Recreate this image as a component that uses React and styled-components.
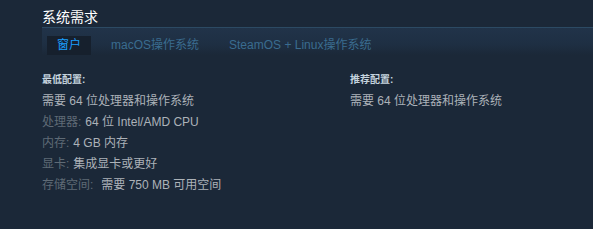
import React from "react";
import styled, { createGlobalStyle } from "styled-components";

const Global = createGlobalStyle`
  body {
    margin: 0;
    background: #1b2838;
    overflow: hidden;
    font-family: "Liberation Sans", Arial, "Noto Sans CJK SC", sans-serif;
  }
`;

const Page = styled.div`
  width: 593px;
  height: 229px;
  background: #1b2838;
  padding-left: 42px;
  box-sizing: border-box;
`;

const Heading = styled.div`
  padding-top: 8px;
  height: 19px;
  font-size: 14px;
  line-height: 19px;
  color: #ffffff;
`;

const TabBar = styled.div`
  display: flex;
  gap: 10px;
  height: 28px;
  padding: 8px 0 0 5px;
  box-sizing: border-box;
  border-top: 1px solid #2c4a63;
  background: linear-gradient(to bottom, #213349 0%, #1e2f43 60%, #1b2838 100%);
`;

const Tab = styled.div`
  padding: 0 10px;
  height: 19px;
  line-height: 19px;
  font-size: 12px;
  color: ${(p) => (p.$active ? "#1a9fff" : "#3a6c8f")};
  background: ${(p) => (p.$active ? "#16202d" : "transparent")};
`;

const Columns = styled.div`
  display: grid;
  grid-template-columns: 308px 1fr;
  padding-top: 17px;
`;

const Column = styled.div`
  display: flex;
  flex-direction: column;
`;

const ColTitle = styled.div`
  font-size: 10px;
  font-weight: 700;
  color: #c6d4df;
  height: 15px;
  line-height: 15px;
  margin-bottom: 4px;
`;

const Row = styled.div`
  font-size: 12px;
  line-height: 21px;
  color: #acb2b8;
`;

const Label = styled.span`
  color: #5f6b76;
  margin-right: ${(p) => p.$gap || 4}px;
`;

const App = () => {
  return (
    <Page>
      <Global />
      <Heading>系统需求</Heading>
      <TabBar>
        <Tab $active>窗户</Tab>
        <Tab>macOS操作系统</Tab>
        <Tab>SteamOS + Linux操作系统</Tab>
      </TabBar>
      <Columns>
        <Column>
          <ColTitle>最低配置:</ColTitle>
          <Row>需要 64 位处理器和操作系统</Row>
          <Row>
            <Label>处理器:</Label>64 位 Intel/AMD CPU
          </Row>
          <Row>
            <Label>内存:</Label>4 GB 内存
          </Row>
          <Row>
            <Label>显卡:</Label>集成显卡或更好
          </Row>
          <Row>
            <Label $gap={8}>存储空间:</Label>需要 750 MB 可用空间
          </Row>
        </Column>
        <Column>
          <ColTitle>推荐配置:</ColTitle>
          <Row>需要 64 位处理器和操作系统</Row>
        </Column>
      </Columns>
    </Page>
  );
};

export default App;
